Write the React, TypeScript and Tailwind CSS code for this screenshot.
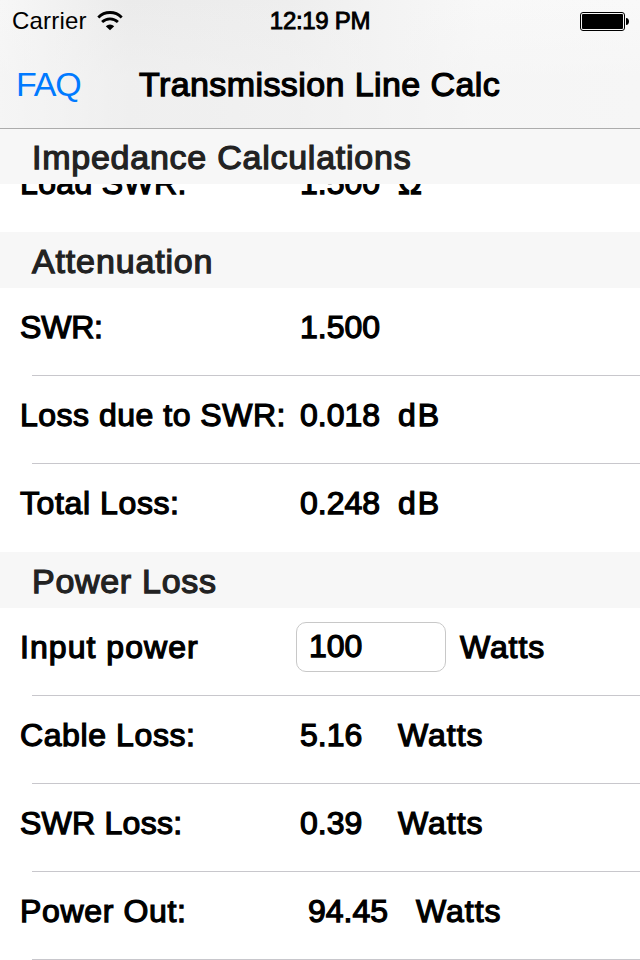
import React, { useState } from "react";

const medium = "[-webkit-text-stroke:1.25px_currentColor]";

// SVG Components
const WifiIcon = () => (
  <svg className="w-[26px] h-5" viewBox="0 0 26 20">
    <path d="M1.3 6.4A16.4 16.4 0 0 1 24.7 6.4" fill="none" stroke="black" strokeWidth="2.8" />
    <path d="M5.1 11.1A11.2 11.2 0 0 1 20.9 11.1" fill="none" stroke="black" strokeWidth="2.8" />
    <path d="M13 19.2L8.8 15.2A6 6 0 0 1 17.2 15.2Z" fill="black" />
  </svg>
);

const BatteryIcon = () => (
  <svg className="w-[50px] h-5" viewBox="0 0 50 20">
    <rect x="0.5" y="0.5" width="44" height="18" rx="2.5" fill="none" stroke="black" />
    <rect x="2" y="2" width="41" height="15" rx="1" fill="black" />
    <path d="M46 6C48 6 49 7.6 49 9.5C49 11.4 48 13 46 13Z" fill="black" />
  </svg>
);

const SectionHeader = ({ title, spacing }: { title: string; spacing: string }) => (
  <h2 className={`h-14 bg-[#f7f7f7] pl-8 pt-[9px] text-[34px] leading-10 text-[#222] ${medium} ${spacing}`}>
    {title}
  </h2>
);

interface RowProps {
  label: string;
  spacing?: string;
  last?: boolean;
  className?: string;
  children: React.ReactNode;
}

const Row = ({ label, spacing = "", last, className = "", children }: RowProps) => (
  <div className={`h-[88px] flex flex-col justify-between bg-white ${className}`}>
    <div className={`flex pl-5 pt-[19px] text-[32px] leading-10 whitespace-pre ${medium}`}>
      <span className={`w-[280px] shrink-0 ${spacing}`}>{label}</span>
      {children}
    </div>
    {!last && <div className="ml-8 h-px bg-[#c8c7cc]"></div>}
  </div>
);

const Value = ({ value, unit, spacing = "tracking-[1px]" }: { value: string; unit?: string; spacing?: string }) => (
  <>
    <span className="w-[98px]">{value}</span>
    <span className={spacing}>{unit}</span>
  </>
);

export default function TransmissionLineCalc() {
  const [power, setPower] = useState("100");

  return (
    <div className="w-[640px] h-[960px] overflow-hidden bg-white text-black font-['Liberation_Sans',Arial,sans-serif]">
      {/* Status bar and navigation */}
      <header className="relative z-10 h-[129px] border-b border-[#acacac] bg-[linear-gradient(to_bottom,transparent,#f3f3f380_60%),linear-gradient(to_right,#f7f7f7,#ebebeb_20%,#eeeeee_45%,#f8f8f8_75%,#f9f9f9)]">
        <div className="grid grid-cols-3 h-10 pl-3 pr-[10px] text-[24px] leading-10">
          <div className="flex items-center gap-[10px] pt-px">
            <span className="tracking-[0.2px]">Carrier</span>
            <WifiIcon />
          </div>
          <div className="text-center pt-px pr-[2px] tracking-[-0.3px] [-webkit-text-stroke:0.9px_currentColor]">12:19 PM</div>
          <div className="flex items-center justify-end pt-[2px]">
            <BatteryIcon />
          </div>
        </div>
        <div className="flex items-start pl-4 pt-6 text-[34px] leading-10">
          <button className="w-[123px] text-left leading-10 tracking-[-1.2px] text-[#007aff]">FAQ</button>
          <h1 className={`whitespace-nowrap tracking-[0.41px] ${medium}`}>Transmission Line Calc</h1>
        </div>
      </header>

      <main className="-mt-px">
        <SectionHeader title="Impedance Calculations" spacing="tracking-[0.75px]" />
        {/* Row scrolled partly under the sticky header */}
        <div className="h-12 overflow-hidden flex flex-col justify-end">
          <Row label="Load SWR:" spacing="tracking-[0.35px]" last className="shrink-0">
            <Value value="1.500" unit="Ω" />
          </Row>
        </div>

        <SectionHeader title="Attenuation" spacing="tracking-[0.85px]" />
        <Row label="SWR:" spacing="tracking-[-0.2px]">
          <Value value="1.500" />
        </Row>
        <Row label="Loss due to SWR:" spacing="tracking-[0.5px]">
          <Value value="0.018" unit="dB" spacing="tracking-[2px]" />
        </Row>
        <Row label="Total Loss:" spacing="tracking-[0.6px]" last>
          <Value value="0.248" unit="dB" spacing="tracking-[2px]" />
        </Row>

        <SectionHeader title="Power Loss" spacing="tracking-[0.7px]" />
        <Row label="Input power" spacing="tracking-[1.05px]">
          <input
            type="text"
            value={power}
            onChange={(e) => setPower(e.target.value)}
            className="-ml-1 -mt-[5px] -mb-2 h-[50px] w-[150px] rounded-[10px] border border-[#c8c8c8] pl-3 pb-[2px] outline-none"
          />
          <span className="ml-[14px] tracking-[0.9px]">Watts</span>
        </Row>
        <Row label="Cable Loss:" spacing="tracking-[0.6px]">
          <Value value="5.16" unit="Watts" />
        </Row>
        <Row label="SWR Loss:" spacing="tracking-[0.25px]">
          <Value value="0.39" unit="Watts" />
        </Row>
        <Row label="Power Out:" spacing="tracking-[0.65px]">
          <span className="ml-2 w-[108px]">94.45</span>
          <span className="tracking-[1px]">Watts</span>
        </Row>
      </main>
    </div>
  );
}
